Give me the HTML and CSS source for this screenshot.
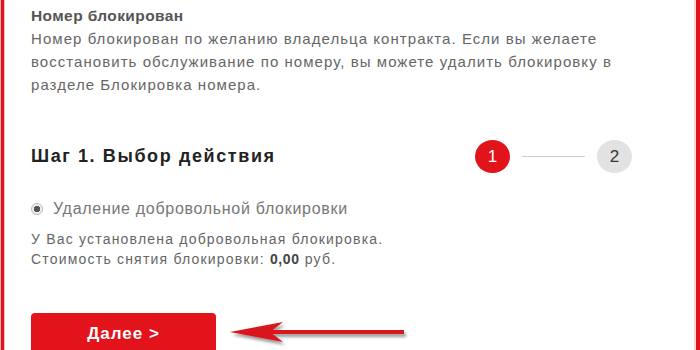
FILE: index.html
```html
<!DOCTYPE html>
<html lang="ru">
<head>
<meta charset="utf-8">
<link rel="stylesheet" href="styles.css">
</head>
<body>
<div class="frame">
  <section class="notice">
    <div class="notice-title">Номер блокирован</div>
    <p class="notice-text">Номер блокирован по желанию владельца контракта. Если вы желаете восстановить обслуживание по номеру, вы можете удалить блокировку в разделе Блокировка номера.</p>
  </section>
  <section class="step">
    <div class="step-head">
      <h2 class="step-title">Шаг 1. Выбор действия</h2>
      <div class="stepper">
        <span class="dot dot-active">1</span>
        <span class="dash"></span>
        <span class="dot dot-idle">2</span>
      </div>
    </div>
    <label class="option"><span class="radio"></span>Удаление добровольной блокировки</label>
    <p class="info">У Вас установлена добровольная блокировка.<br>Стоимость снятия блокировки: <b>0,00</b> руб.</p>
    <div class="actions">
      <button class="btn">Далее &gt;</button>
      <svg class="arrow" width="182" height="28" viewBox="0 0 182 28">
        <defs>
          <filter id="sh" x="-10%" y="-50%" width="120%" height="200%">
            <feGaussianBlur in="SourceAlpha" stdDeviation="1.5"/>
            <feOffset dx="2" dy="3"/>
            <feComponentTransfer><feFuncA type="linear" slope="0.4"/></feComponentTransfer>
            <feMerge><feMergeNode/><feMergeNode in="SourceGraphic"/></feMerge>
          </filter>
        </defs>
        <g filter="url(#sh)">
          <path d="M2 12 L55 2 L44 10.5 L44 13.5 L55 22 Z" fill="#d8141e"/>
          <rect x="34" y="10" width="142" height="4" fill="#d8141e"/>
        </g>
      </svg>
    </div>
  </section>
</div>
</body>
</html>
```
FILE: styles.css
```css
html, body {
  margin: 0;
  padding: 0;
  background: #fff;
}
body {
  font-family: "Liberation Sans", Arial, sans-serif;
  width: 700px;
  height: 350px;
  overflow: hidden;
}
.frame {
  box-sizing: border-box;
  width: 699px;
  height: 350px;
  margin-left: 1px;
  border-left: 3px solid #e3131b;
  border-right: 4px solid #e3131b;
  box-shadow: -1px 0 0 #f4b0b0, 1px 0 0 #f7c4c4 inset, -2px 0 0 #fbd6d6 inset;
  padding: 4px 0 0 27px;
}
.notice-title {
  font-size: 15.5px;
  letter-spacing: 0.4px;
  font-weight: bold;
  color: #555;
  line-height: 23px;
}
.notice-text {
  margin: 0;
  font-size: 15px;
  letter-spacing: 1.05px;
  line-height: 23px;
  color: #666;
  width: 600px;
}
.step {
  padding-top: 44px;
}
.step-head {
  display: flex;
  align-items: center;
  justify-content: space-between;
  width: 601px;
}
.step-title {
  margin: 0;
  font-size: 18px;
  letter-spacing: 1.6px;
  font-weight: bold;
  color: #222;
}
.stepper {
  display: flex;
  align-items: center;
}
.dot {
  width: 35px;
  height: 33px;
  border-radius: 50%;
  display: flex;
  align-items: center;
  justify-content: center;
  font-size: 17px;
}
.dot-active {
  background: #e3131b;
  color: #fff;
}
.dot-idle {
  background: #e2e2e2;
  color: #333;
}
.dash {
  width: 63px;
  height: 1px;
  background: #d0d0d0;
  margin: 0 12px;
}
.option {
  display: flex;
  align-items: center;
  margin-top: 27px;
  font-size: 16px;
  letter-spacing: 0.7px;
  color: #777;
}
.radio {
  box-sizing: border-box;
  width: 12px;
  height: 12px;
  border-radius: 50%;
  border: 1px solid #bbb;
  background: radial-gradient(circle, #555 0 3px, #eee 3.5px);
  margin-right: 10px;
}
.info {
  margin: 11px 0 0;
  font-size: 14px;
  letter-spacing: 1.2px;
  line-height: 20px;
  color: #666;
}
.info b {
  color: #444;
  letter-spacing: 0.6px;
}
.actions {
  display: flex;
  align-items: center;
  margin-top: 44px;
}
.btn {
  width: 185px;
  height: 44px;
  border: 0;
  border-radius: 4px;
  background: #e3131b;
  color: #fff;
  font-family: inherit;
  font-size: 17px;
  letter-spacing: 1px;
  font-weight: bold;
  padding: 0 0 2px;
}
.arrow {
  margin-left: 12px;
  margin-top: -2px;
}
```
